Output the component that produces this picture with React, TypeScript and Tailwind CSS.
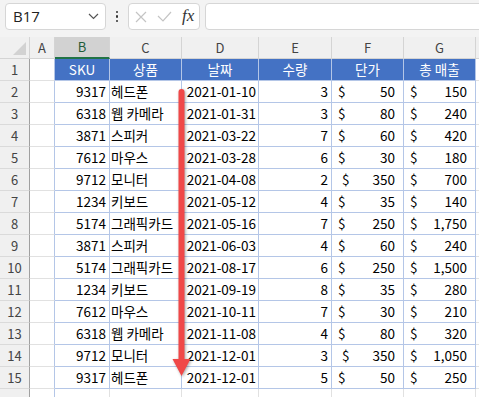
import React from "react";

const rows = [
  ["9317", "헤드폰", "2021-01-10", "3", "50", "150"],
  ["6318", "웹 카메라", "2021-01-31", "3", "80", "240"],
  ["3871", "스피커", "2021-03-22", "7", "60", "420"],
  ["7612", "마우스", "2021-03-28", "6", "30", "180"],
  ["9712", "모니터", "2021-04-08", "2", "350", "700"],
  ["1234", "키보드", "2021-05-12", "4", "35", "140"],
  ["5174", "그래픽카드", "2021-05-16", "7", "250", "1,750"],
  ["3871", "스피커", "2021-06-03", "4", "60", "240"],
  ["5174", "그래픽카드", "2021-08-17", "6", "250", "1,500"],
  ["1234", "키보드", "2021-09-19", "8", "35", "280"],
  ["7612", "마우스", "2021-10-11", "7", "30", "210"],
  ["6318", "웹 카메라", "2021-11-08", "4", "80", "320"],
  ["9712", "모니터", "2021-12-01", "3", "350", "1,050"],
  ["9317", "헤드폰", "2021-12-01", "5", "50", "250"],
];

const headers = ["SKU", "상품", "날짜", "수량", "단가", "총 매출"];
const widths = ["w-[55px]", "w-[72px]", "w-[77px]", "w-[73px]", "w-[72px]", "w-[72px]"];

const rowHead = "w-[30px] shrink-0 flex items-center justify-center bg-[#f0f0f0] border-r border-b border-r-[#a0a0a0] border-b-[#dadada] text-[#444] text-[13px]";
const colA = "w-[25px] shrink-0 bg-white border-b border-r border-b-[#e1e1e1] border-r-[#b4c6e7]";
const cell = "shrink-0 bg-white border-r border-b border-[#b4c6e7] flex items-center";
const headCell = "shrink-0 bg-[#4472c4] text-white border-r border-b border-[#b4c6e7] flex items-center justify-center";
const extra = "flex-1 bg-white border-b border-[#e1e1e1]";

function Money({ v, wide }: { v: string; wide?: boolean }) {
  return (
    <div className="flex w-full justify-between pr-[8px]">
      <span className={wide ? "pl-[10px]" : "pl-[6px]"}>$</span>
      <span>{v}</span>
    </div>
  );
}

export default function App() {
  return (
    <div className="relative w-[479px] h-[397px] overflow-hidden bg-[#f3f3f3] text-black font-['Noto_Sans_CJK_KR',sans-serif] text-[13.5px]">
      {/* Toolbar */}
      <div className="flex items-start pl-[5px] pt-[3px] h-[37px]">
        <div className="w-[101px] h-[27px] shrink-0 bg-white border border-[#d6d6d6] rounded-[4px] flex items-center justify-between pl-[7px] pr-[6px]">
          <span className="text-[15px] text-[#222] font-['Open_Sans',sans-serif]">B17</span>
          <svg width="11" height="7" viewBox="0 0 11 7" fill="none" stroke="#555" strokeWidth="1.2">
            <path d="M1 1 L5.5 5.5 L10 1" />
          </svg>
        </div>
        <div className="w-[22px] h-[27px] shrink-0 flex flex-col items-center justify-center gap-[2px]">
          <span className="w-[2.5px] h-[2.5px] bg-[#333] rounded-full" />
          <span className="w-[2.5px] h-[2.5px] bg-[#333] rounded-full" />
          <span className="w-[2.5px] h-[2.5px] bg-[#333] rounded-full" />
        </div>
        <div className="w-[72px] h-[27px] shrink-0 bg-white border border-[#d6d6d6] rounded-[4px] flex items-center pl-[6px] gap-[10px]">
          <svg width="12" height="12" viewBox="0 0 12 12" stroke="#c4c4c4" strokeWidth="1.2">
            <path d="M1 1 L11 11 M11 1 L1 11" />
          </svg>
          <svg width="15" height="11" viewBox="0 0 15 11" fill="none" stroke="#c4c4c4" strokeWidth="1.2">
            <path d="M1 5 L6 10 L14 1" />
          </svg>
          <span className="italic font-['Liberation_Serif',serif] text-[17px] text-[#333] leading-none pb-[2px]">fx</span>
        </div>
        <div className="ml-[5px] w-[300px] h-[27px] shrink-0 bg-white border border-[#d6d6d6] rounded-[4px]" />
      </div>

      {/* Column headers */}
      <div className="flex h-[22px] bg-[#f0f0f0] text-[#444] text-[13px]">
        <div className="w-[30px] shrink-0 border-r border-b border-[#d4d4d4] relative">
          <svg className="absolute right-[3px] bottom-[3px]" width="13" height="13" viewBox="0 0 13 13">
            <path d="M13 0 L13 13 L0 13 Z" fill="#d2d2d2" />
          </svg>
        </div>
        <div className="w-[25px] shrink-0 border-r border-b border-[#d4d4d4] flex items-center justify-center">A</div>
        <div className="w-[55px] shrink-0 bg-[#d2d2d2] border-r border-[#d4d4d4] border-b-2 border-b-[#217346] flex items-center justify-center text-[#1f5c39]">B</div>
        <div className="w-[72px] shrink-0 border-r border-b border-[#d4d4d4] flex items-center justify-center">C</div>
        <div className="w-[77px] shrink-0 border-r border-b border-[#d4d4d4] flex items-center justify-center">D</div>
        <div className="w-[73px] shrink-0 border-r border-b border-[#d4d4d4] flex items-center justify-center">E</div>
        <div className="w-[72px] shrink-0 border-r border-b border-[#d4d4d4] flex items-center justify-center">F</div>
        <div className="w-[72px] shrink-0 border-r border-b border-[#d4d4d4] flex items-center justify-center">G</div>
        <div className="flex-1 border-b border-[#d4d4d4]" />
      </div>

      {/* Row 1: table header */}
      <div className="flex h-[22px]">
        <div className={rowHead}>1</div>
        <div className={colA} />
        {headers.map((h, i) => (
          <div key={h} className={`${headCell} ${widths[i]}`}>
            {h}
          </div>
        ))}
        <div className={extra} />
      </div>

      {/* Data rows */}
      {rows.map((r, i) => (
        <div key={i} className="flex h-[22px]">
          <div className={rowHead}>{i + 2}</div>
          <div className={colA} />
          <div className={`${cell} w-[55px] justify-end pr-[3px]`}>{r[0]}</div>
          <div className={`${cell} w-[72px] pl-[1px]`}>{r[1]}</div>
          <div className={`${cell} w-[77px] justify-end pr-[2px]`}>{r[2]}</div>
          <div className={`${cell} w-[73px] justify-end pr-[3px]`}>{r[3]}</div>
          <div className={`${cell} w-[72px]`}>
            <Money v={r[4]} wide={r[4] === "350"} />
          </div>
          <div className={`${cell} w-[72px]`}>
            <Money v={r[5]} />
          </div>
          <div className={extra} />
        </div>
      ))}

      {/* Row 16 (cut off) */}
      <div className="flex h-[22px]">
        <div className={rowHead} />
        <div className={colA} />
        <div className="w-[55px] shrink-0 bg-white border-r border-b border-[#e1e1e1]" />
        <div className="w-[72px] shrink-0 bg-white border-r border-b border-[#e1e1e1]" />
        <div className="w-[77px] shrink-0 bg-white border-r border-b border-[#e1e1e1]" />
        <div className="w-[73px] shrink-0 bg-white border-r border-b border-[#e1e1e1]" />
        <div className="w-[72px] shrink-0 bg-white border-r border-b border-[#e1e1e1]" />
        <div className="w-[72px] shrink-0 bg-white border-r border-b border-[#e1e1e1]" />
        <div className={extra} />
      </div>

      {/* Red arrow overlay */}
      <svg
        className="absolute left-[170px] top-[86px] drop-shadow-[1px_1px_1.5px_rgba(0,0,0,0.35)]"
        width="23"
        height="294"
        viewBox="0 0 23 294"
      >
        <line x1="11.5" y1="6" x2="11.5" y2="276" stroke="#f04848" strokeWidth="6" strokeLinecap="round" />
        <path d="M2.5 273 L20.5 273 L11.5 290 Z" fill="#f04848" />
      </svg>
    </div>
  );
}
